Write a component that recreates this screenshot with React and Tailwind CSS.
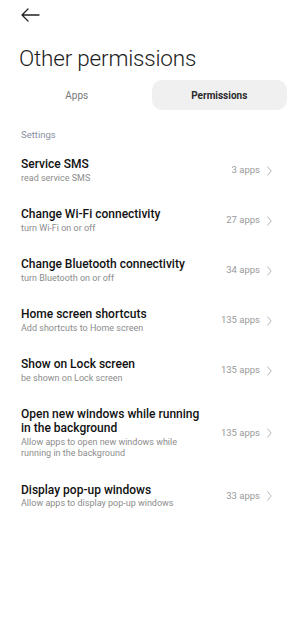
import React from "react";

const rows = [
  { t: "Service SMS", s: "read service SMS", n: "3 apps" },
  { t: "Change Wi-Fi connectivity", s: "turn Wi-Fi on or off", n: "27 apps" },
  { t: "Change Bluetooth connectivity", s: "turn Bluetooth on or off", n: "34 apps" },
  { t: "Home screen shortcuts", s: "Add shortcuts to Home screen", n: "135 apps" },
  { t: "Show on Lock screen", s: "be shown on Lock screen", n: "135 apps" },
  {
    t: "Open new windows while running in the background",
    s: "Allow apps to open new windows while running in the background",
    n: "135 apps",
  },
  { t: "Display pop-up windows", s: "Allow apps to display pop-up windows", n: "33 apps" },
];

export default function App() {
  return (
    <div
      className="w-[296px] h-[628px] bg-white overflow-hidden"
      style={{ fontFamily: "Roboto, 'Noto Sans', sans-serif" }}
    >
      <div className="h-[32px] pl-[20px] pt-[7px]">
        <svg width="20" height="16" viewBox="0 0 20 16" fill="none" stroke="#222" strokeWidth="1.3" strokeLinecap="round" strokeLinejoin="round">
          <path d="M19 8H2M8 2L2 8l6 6" />
        </svg>
      </div>
      <div className="pl-[19px] text-[22.5px] leading-[30px] font-light text-[#1c1c1c] mt-[11px] tracking-[-0.2px]">
        Other permissions
      </div>
      <div className="mt-[7px] mx-[9px] grid grid-cols-2 h-[30px] gap-[7px]">
        <div className="flex items-center justify-center text-[10px] text-[#777]">Apps</div>
        <div className="flex items-center justify-center rounded-[10px] bg-[#f0f0f0] text-[10px] font-bold text-[#2a2a2a]">
          Permissions
        </div>
      </div>
      <div className="pl-[21px] mt-[19px] text-[9.5px] leading-[12px] text-[#8a90a2]">Settings</div>
      <div className="mt-[5px]">
        {rows.map((r, i) => (
          <div key={i} className="flex items-center pl-[21px] pr-[24px] pt-[11px] pb-[12px]">
            <div className="flex-1 pr-[10px] min-w-0">
              <div className="text-[12px] leading-[14px] font-medium text-[#111] max-w-[192px]">{r.t}</div>
              <div className="text-[9px] leading-[11.5px] text-[#8c8c8c] mt-[1.5px] max-w-[180px]">{r.s}</div>
            </div>
            <div className="flex items-center gap-[7px] shrink-0">
              <span className="text-[9.5px] text-[#999]">{r.n}</span>
              <svg width="5" height="10" viewBox="0 0 5 10" fill="none" stroke="#b5b5b5" strokeWidth="1" strokeLinecap="round" strokeLinejoin="round">
                <path d="M0.7 0.8L4.2 5 0.7 9.2" />
              </svg>
            </div>
          </div>
        ))}
      </div>
    </div>
  );
}
